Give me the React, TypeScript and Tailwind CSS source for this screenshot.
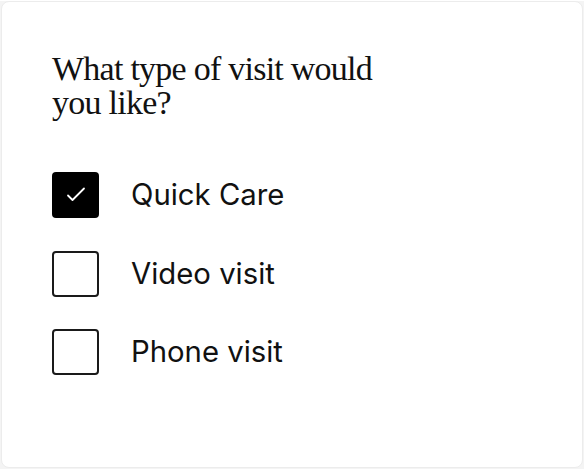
import React from "react";

const options = [
  { label: "Quick Care", checked: true },
  { label: "Video visit", checked: false },
  { label: "Phone visit", checked: false },
];

export default function App() {
  return (
    <div className="w-[584px] h-[469px] bg-[#f4f4f4]">
      <div className="w-[582px] h-[467px] ml-[1px] mt-[1px] bg-white rounded-[8px] border border-[#ececec] pl-[50px] pt-[50px]">
        <h1
          className="text-[34px] leading-[34px] tracking-[-0.75px] text-[#111] w-[345px]"
          style={{ fontFamily: '"Liberation Serif", "DejaVu Serif", serif' }}
        >
          What type of visit would you like?
        </h1>
        <div className="mt-[52px] flex flex-col gap-[32.5px]">
          {options.map((o) => (
            <div key={o.label} className="flex items-center h-[46px]">
              <div
                className={
                  o.checked
                    ? "w-[47px] h-[46px] rounded-[4px] bg-black flex items-center justify-center"
                    : "w-[47px] h-[46px] rounded-[4px] border-[2px] border-[#1a1a1a] bg-white"
                }
              >
                {o.checked && (
                  <svg width="20" height="20" viewBox="0 0 20 20" fill="none">
                    <path d="M2 10.5 L6.5 15 L18 3.5" stroke="white" strokeWidth="1.8" strokeLinecap="round" strokeLinejoin="round" />
                  </svg>
                )}
              </div>
              <span
                className="ml-[32px] text-[29.3px] text-[#111]"
                style={{ fontFamily: 'Inter, "Noto Sans", sans-serif' }}
              >
                {o.label}
              </span>
            </div>
          ))}
        </div>
      </div>
    </div>
  );
}
